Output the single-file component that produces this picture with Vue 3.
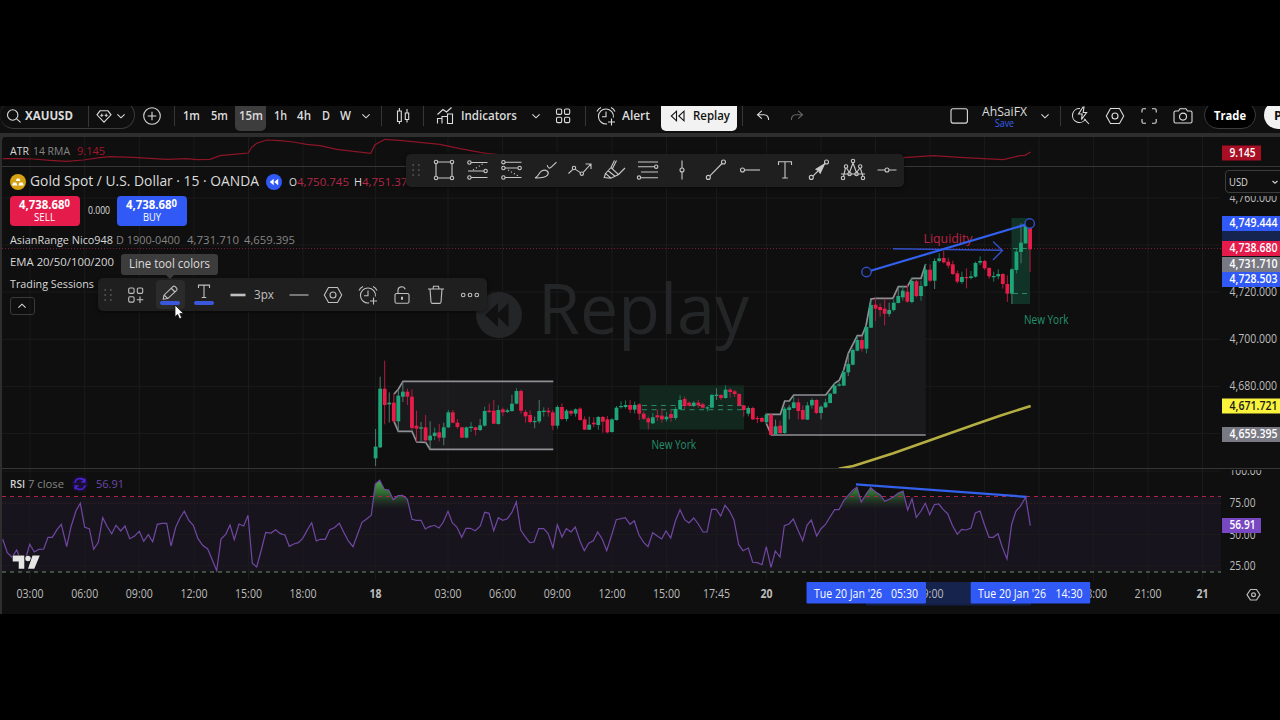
<script setup>
import { h } from 'vue'

// Single line of text stretched to an exact width
const Fit = (p) =>
  h('svg', { width: p.w, height: 20, class: 'fit' }, [
    h('text', { x: 0, y: 14, textLength: p.w, lengthAdjust: 'spacingAndGlyphs' }, p.sup ? [p.t, h('tspan', { dy: -1.8, 'font-size': 10 }, p.sup)] : p.t),
  ])
Fit.props = ['w', 't', 'sup']

const dot = (x, y, r = 1.7) => `<circle cx="${x}" cy="${y}" r="${r}"/>`
const p = (d, extra = '') => `<path d="${d}" ${extra}/>`
const hexa = p('M-4.5-7.5H4.5L8.7 0 4.5 7.5H-4.5L-8.7 0Z') + dot(0, 0, 3)
const alarm = p('M7.4 1.5A7.5 7.5 0 1 0 1 7.9M0-4.5V.8H-4M-9-4.5A8 8 0 0 1-5-8.6M5-8.6A8 8 0 0 1 9-4.5M5.5 2.5V9.5M2 6H9')
const glyphs = {
  search: dot(-.3, -1, 5.2) + p('M3.6 2.8 7.6 6.3'),
  gem: p('M-4-5.2H4L7-1.2 0 6.2-7-1.2Z') + p('M-2.2-2.4V1M-3.7-.7H-.7M2.2-2.4V1M.7-.7H3.7', 'stroke-width="1"'),
  chev: p('M-3.6-1.6 0 1.8 3.6-1.6'),
  up: p('M-3.6 1.6 0-1.8 3.6 1.6'),
  plus: dot(0, 0, 8.3) + p('M-4.3 0H4.3M0-4.3V4.3'),
  candles: p('M-5.5-5H-1.7V5.5H-5.5ZM-3.6-8V-5M-3.6 5.5V8M2.3-3H5.7V3.5H2.3ZM4-7V-3M4 3.5V6.5'),
  ind: p('M-7.5 7.5V2.5H-3V7.5M-3 7.5V.5H2.5V7.5M2.5 7.5V-2H7.5V7.5ZM-7.5-1.5-2-6.5 1.5-4 6.5-8.5'),
  grid: [[-6.5, -7], [1.5, -7], [-6.5, 1.2], [1.5, 1.2]].map(([x, y]) => `<rect x="${x}" y="${y}" width="5.2" height="5.4" rx="1.3"/>`).join(''),
  alarm,
  undo: p('M-1.2-5.2-5.5-1.3-1.2 2.6M-5.5-1.3H1Q5.6-1.3 5.6 4'),
  redo: p('M1.2-5.2 5.5-1.3 1.2 2.6M5.5-1.3H-1Q-5.6-1.3-5.6 4'),
  layout: '<rect x="-8" y="-7.3" width="16.4" height="14.4" rx="2"/>',
  flash: p('M4.5 3A7 7 0 1 1-1-7.5M3.2 2.8 8 8M2-9-2.5-2H1.2L.5 3.5 5.6-3.5H2.2L3-9Z'),
  hexa,
  full: p('M-7-3.5V-6Q-7-7.2-5.8-7.2H-3M3-7.2H6Q7.2-7.2 7.2-6V-3.5M7.2 3V6Q7.2 7.2 6 7.2H3M-3 7.2H-5.8Q-7 7.2-7 6V3'),
  camera: '<path d="M-7.5-5H-4.5L-3-7.3H3L4.5-5H7.5Q9-5 9-3.500V5.500Q9 7 7.500 7H-7.500Q-9 7-9 5.500V-3.500Q-9-5-7.500-5Z"/>' + dot(0, .6, 3.5),
  rect: p('M-6.2-8H6.2M-6.2 8H6.2M-8-6V6M8-6V6') + dot(-8, -8) + dot(8, -8) + dot(-8, 8) + dot(8, 8),
  fib1: p('M-7-7.5H9.5M-10 1H6M-7 7.5H9.5') + p('M-5 0 6-7', 'stroke-dasharray="1.2 2.2"') + dot(-8.6, -7.5) + dot(7.6, 1) + dot(-8.6, 7.5),
  fib2: p('M-7-7.8H9.5M-7-2H5.8M-7 7.5H9.5') + p('M-4 0 7 6.5', 'stroke-dasharray="1.2 2.2"') + dot(-8.6, -7.8) + dot(-8.6, -2) + dot(7.6, -2) + dot(-8.6, 7.5),
  brush: p('M-11 8C-7.500 7-7.500 2.500-4 .8 0-1.200 3.800 2 1.500 5.200-1 8.300-6 8-11 8ZM1.200-4.800Q2.500 0 5.500-3.200L10.500-7.800'),
  poly: p('M-11.5 3.5-7.4-.3M-4.6-.6.4 2.6M3.3 2.3 10.8-6M5.5-6H11V-1') + dot(-6, -2) + dot(1.8, 3.7),
  marker: p('M-1.500-1.500 2.500-9.500M-8.500 3.500-3-2.500 4.500 4.500-3 8.200ZM-8.500 3.500-9.800 7.500-3 8.200M-5.800.8 1 6.200M4.500 4.500 11-2M-3-2.500.5-9.500'),
  chan: p('M-10-8H10M-10-3.3H6M-7 2H10M-7 7.8H10') + dot(8.2, -3.3) + dot(-9, 7.6),
  vert: p('M0-9.5V-1.8M0 1.8V9.5') + dot(0, 0, 2),
  trend: p('M-6.1 5.9 6-6.5') + dot(-7.7, 7.4, 2) + dot(7.5, -8, 2),
  ray: p('M-5.5 0H10') + dot(-7.5, 0, 2),
  text: p('M-6.5-5V-8.2H6.5V-5M0-8.2V8M-2.8 8H2.8'),
  arrow: p('M-6.1 6.1-1 1M3-3 6-6.5') + p('M-3-.8 5.500-6 1.200 3.200-.3.9Z', 'fill="currentColor"') + dot(-7.7, 7.4, 2) + dot(7.5, -8, 2),
  pattern: p('M-9.5 6.5-7.5-2M-6.5-2-3.5 2.5M-3.5 2.5 0-7M0-7 3.5 2.5M3.5 2.5 7-2M7.3-2 10 6.5M-12 4H12') + dot(-10, 8) + dot(-7, -3.5) + dot(-3.5, 4) + dot(0, -9) + dot(3.5, 4) + dot(7.2, -3.5) + dot(10, 8),
  hline: p('M-9.5 0H-2M2 0H9.5') + dot(0, 0, 2),
  tmpl: [[-7.3, -7], [1.3, -7], [-7.3, 1.7]].map(([x, y]) => `<rect x="${x}" y="${y}" width="5.4" height="5.4" rx="1.3"/>`).join('') + p('M4 1.5V8M.8 4.8H7.3'),
  pencil: p('M-6.8 4.2-6 .2 2.8-8.4Q4-9.5 5.2-8.3L6.6-6.8Q7.6-5.6 6.6-4.6L-2.2 3.6-6.8 4.2ZM-5.5.5-2.3 3.3M1-7 5-3'),
  t2: p('M-5.5-7V-9.9H5.5V-7M0-9.9V2.5M-2.3 2.5H2.3'),
  thick: p('M-7.5 0H7.5', 'stroke-width="2.6"'),
  thin: p('M-9.5 0H9.5'),
  lock: '<rect x="-7" y="-1.5" width="14" height="9.8" rx="1.6"/>' + p('M-4-1.5V-4.5A3.7 3.7 0 0 1 3.2-5.7') + p('M0 1.7V4.7', 'stroke-width="2"'),
  trash: p('M-8-6H8M-6-6-5 7Q-4.9 8.4-3.5 8.4H3.5Q4.9 8.4 5 7L6-6M-3-6-2.5-8.7H2.5L3-6'),
  more: dot(-6.8, 0, 1.8) + dot(0, 0, 1.8) + dot(6.8, 0, 1.8),
  grip: [-5, 0, 5].map((y) => `<path d="M-3.6 ${y}h1.6M2 ${y}h1.6" stroke="#5c5c5c" stroke-width="1.5"/>`).join(''),
  rew: p('M-1.5-4.8V4.8L-6.7 0ZM6-4.8V4.8L.8 0Z'),
}
const Icon = (q) => h('svg', { width: 28, height: 28, viewBox: '-14 -14 28 28', class: 'icon', innerHTML: glyphs[q.n] })
Icon.props = ['n']

const bar = [
  { w: 34, icon: 'plus' }, { w: 5 }, { w: 1, div: 1 }, { w: 4 },
  { w: 25, t: '1m', tw: 17 }, { w: 31, t: '5m', tw: 17 }, { w: 31, t: '15m', tw: 24, on: 1 },
  { w: 29, t: '1h', tw: 13 }, { w: 18, t: '4h', tw: 14 }, { w: 25, t: 'D', tw: 8 }, { w: 15, t: 'W', tw: 11 },
  { w: 26, icon: 'chev' }, { w: 2 }, { w: 1, div: 1 }, { w: 41, icon: 'candles' }, { w: 1, div: 1 }, { w: 5 },
  { w: 32, icon: 'ind' }, { w: 56, t: 'Indicators', tw: 56 }, { w: 38, icon: 'chev' }, { w: 16, icon: 'grid' },
  { w: 14 }, { w: 1, div: 1 }, { w: 4 }, { w: 32, icon: 'alarm' }, { w: 28, t: 'Alert', tw: 28 }, { w: 11 },
  { w: 76, replay: 1 }, { w: 5 }, { w: 1, div: 1 }, { w: 39, icon: 'undo' }, { w: 30, icon: 'redo', dim: 1 },
  { w: 138 }, { w: 17, icon: 'layout' }, { w: 15 }, { w: 45, name: 1 }, { w: 3 }, { w: 30, icon: 'chev' }, { w: 1, div: 1 },
  { w: 39, icon: 'flash' }, { w: 30, icon: 'hexa' }, { w: 38, icon: 'full' }, { w: 30, icon: 'camera' }, { w: 6 },
]
const tools = ['rect', 'fib1', 'fib2', 'brush', 'poly', 'marker', 'chan', 'vert', 'trend', 'ray', 'text', 'arrow', 'pattern', 'hline']

// [wick top, body top, body bottom, wick bottom, rising], in thirds of a pixel below y0
const series = [
  [250, `537,590,625,648,1 380,416,592,594,1 332,416,465,523,0 427,458,463,518,1 432,458,514,518,0 418,437,514,545,1 396,425,440,456,1 416,425,440,465,0 418,440,534,540,0 482,527,536,575,0 516,532,536,575,1 495,532,571,577,0 514,557,571,596,1 533,548,558,570,1 522,547,563,574,0 518,532,563,586,1 480,487,532,534,1 480,487,518,520,0 507,518,531,536,0 530,532,563,564,0 530,532,563,565,1 516,530,534,546,1 530,532,540,556,0 507,526,540,543,1 470,483,527,530,1 461,482,486,490,0 450,482,521,522,0 466,480,522,524,1 473,478,487,499,0 476,481,486,489,1 434,461,483,485,1 415,423,461,463,1 418,423,482,491,0 480,486,499,518,0 481,495,516,520,0 500,513,516,535,1 450,483,514,520,1 472,482,486,500,1 473,482,487,500,0 480,487,527,540,0 465,471,527,536,1`],
  [340, `190,201,237,240,0 207,212,237,244,1 209,213,221,228,0 205,208,221,230,1 202,206,240,242,0 229,238,269,270,0 230,254,269,270,1 232,248,253,262,0 228,231,255,269,1 228,231,245,278,0 228,238,277,280,0 235,238,276,278,1 198,203,240,242,1 184,198,201,206,1 181,195,201,206,1 180,195,209,219,0 185,195,209,220,1 190,193,221,240,0 215,221,236,240,0 230,235,247,268,0 219,232,250,252,1 209,226,232,243,0 205,227,238,248,0 216,230,238,245,1 209,222,234,245,0 201,207,234,240,1 166,180,208,210,1 170,177,198,207,0 185,188,197,200,0 183,188,198,201,1 180,188,196,203,0 188,193,203,206,0 198,202,205,214,1 161,165,203,205,1 145,164,168,180,1 163,165,174,180,0 136,149,174,176,1 144,149,156,173,0 150,154,162,171,0 160,162,196,200,0 195,196,210,230,0 198,204,221,229,1 200,204,238,240,0 228,234,237,249,0 230,234,245,247,0 222,224,246,252,1 222,224,285,285,0 239,259,283,285,1 242,257,279,283,0 200,206,279,283,1`],
  [210, `585,592,600,628,1 560,577,594,596,1 566,577,603,628,0 586,600,628,630,0 576,586,629,630,1 564,570,586,596,1 568,570,609,612,0 586,590,609,628,1 566,577,592,594,1 549,551,579,580,1 520,527,551,552,1 516,523,527,530,1 480,486,527,528,1 430,462,487,498,1 415,420,464,466,1 378,390,422,424,1 378,390,416,425,0 347,351,416,430,1 270,285,353,354,1 264,284,296,333,0 280,291,300,320,0 266,296,311,346,0 278,300,312,320,1 268,278,300,305,1 230,258,279,280,1 226,242,262,272,1 222,245,275,278,0 205,213,276,280,1 210,214,258,262,0 212,228,258,272,1 162,179,228,230,1 163,179,212,216,0 145,153,212,237,1 130,145,153,158,1 123,144,157,160,0 143,155,167,175,0 152,163,192,195,0 182,190,215,220,0 185,201,216,222,1 175,201,204,235,0 183,199,204,208,1 155,159,200,203,1 139,153,158,165,1 150,153,175,180,0 172,174,199,206,0 185,198,200,215,1 178,192,199,208,1 190,192,222,236,0 196,222,251,276,0 175,178,251,282,1 117,125,180,190,1 40,98,126,160,1 36,46,100,102,1 40,50,118,186,0`],
]
const candles = series
  .flatMap(([y0, s]) => s.split(' ').map((c) => { const v = c.split(',').map(Number); return { t: y0 + v[0] / 3, o: y0 + v[1] / 3, c: y0 + v[2] / 3, b: y0 + v[3] / 3, up: v[4] } }))
  .map((c, i) => ({ ...c, x: 375.6 + 4.545 * i, g: c.up && (c.o - c.t > 6 || c.b - c.c > 6) }))

const pts = (x0, y0, s) => s.split(' ').map((q) => { const [x, y] = q.split(',').map(Number); return `${(x0 + x / 3).toFixed(1)},${(y0 + y / 3).toFixed(1)}` }).join(' ')

const box1 = pts(280, 250, '342,432 355,418 369,394 820,394')
const box1b = pts(280, 250, '342,514 355,544 396,544 410,576 437,577 450,598 820,598')
const box2 = pts(760, 210, '19,640 19,613 61,613 74,573 88,573 101,555 197,555 224,520 238,511 251,480 265,430 292,377 306,377 318,347 333,267 347,265 398,265 401,260 415,230 442,230 456,205 483,205 497,162')
const box2b = pts(760, 210, '19,640 34,675 497,675')
const rev = (s) => s.split(' ').reverse().join(' ')
const ema = pts(760, 210, '236,776 280,768 400,730 540,680 640,645 720,617 812,588')
const atr = [
  pts(0, 100, '8,176 60,176 100,177 150,181 200,184 250,180 300,173 330,170 400,172 500,178 560,176 590,179 630,178 660,167 700,163 745,159 755,142 770,130 800,120 840,122 880,126 920,133 960,137'),
  pts(320, 100, '50,148 152,160 165,134 195,118 240,121 300,127 360,133 420,146 480,157 500,160 700,180 1000,178'),
  pts(640, 100, '790,173 880,167 960,172'),
  pts(940, 100, '190,179 240,167 255,166 272,156'),
].join(' ')
const rsi = [
  pts(0, 460, '8,238 22,278 36,292 50,270 62,300 76,300 89,253 103,276 117,268 131,267 144,232 157,232 171,209 184,193 200,260 213,200 228,152 241,130 254,202 268,206 281,268 295,247 308,173 321,199 335,221 348,196 362,213 375,198 389,236 403,229 418,214 431,244 445,224 458,245 472,193 485,190 500,190 513,258 527,202 540,174 553,154 567,182 580,196 594,236 608,256 623,267 636,298 650,332 663,237 677,223 690,195 703,239 717,192 731,198 744,166 757,310 770,321 784,270 797,217 813,219 827,209 841,221 855,225 868,259 881,252 895,248 908,235 922,210 935,188 949,243 961,238 976,238 989,209 1003,203 1018,190 1032,218 1045,243 1059,260 1072,225 1086,187 1099,178 1114,166 1126,72 1139,61 1153,88 1166,90 1180,119 1194,107 1208,106 1222,118 1236,178 1249,181 1263,181 1276,207 1290,199'),
  pts(430, 460, '0,200 13,196 27,204 40,186 54,154 67,188 81,202 95,232 108,205 121,205 136,212 151,198 164,157 177,160 191,212 205,173 218,181 232,176 245,158 259,126 272,210 285,229 299,248 312,246 326,206 341,206 354,220 369,263 382,194 396,231 409,206 423,216 436,201 450,243 463,272 476,250 490,242 503,216 517,238 530,272 546,222 559,179 586,173 600,193 613,182 627,225 641,247 654,260 668,218 682,228 695,237 708,213 722,234 736,184 750,149 764,179 777,189 791,174 805,192 819,216 831,216 845,148 859,148 872,168 885,136 899,154 912,180 926,254 939,272 955,264 968,307 982,308 996,314 1009,260 1023,322 1036,273 1050,291 1063,197 1077,192 1090,177 1104,211 1118,242 1131,196 1144,180 1160,228 1173,206 1186,194 1200,171 1214,149 1227,149 1241,122 1254,107 1268,91'),
  pts(840, 460, '51,82 64,126 78,103 92,83 106,95 120,104 134,124 148,118 161,110 175,99 189,93 203,150 216,116 229,172 243,153 256,130 269,164 283,134 296,132 310,149 323,161 337,196 352,223 365,208 379,210 393,204 406,159 420,153 433,193 447,232 460,232 474,221 487,262 501,297 515,192 528,153 541,139 557,112 571,197'),
].join(' ')
const hot1 = pts(0, 460, '1116,144 1126,72 1139,61 1153,88 1166,90 1180,119 1194,107 1208,106 1222,118 1229,144')
const hot2 = pts(840, 460, '-4,144 11,122 51,82 64,126 78,103 92,83 106,95 120,104 134,124 148,118 161,110 175,99 189,93 201,144')

const times = [[30, '03:00'], [84.7, '06:00'], [139.3, '09:00'], [194, '12:00'], [248.5, '15:00'], [303, '18:00'], [375.6, '18', 1], [448, '03:00'], [502.6, '06:00'], [557.2, '09:00'], [612, '12:00'], [666.5, '15:00'], [716.5, '17:45'], [766.4, '20', 1], [821, ''], [875.5, ''], [930, '09:00'], [984.6, ''], [1039.2, ''], [1093.6, '18:00'], [1148, '21:00'], [1202.5, '21', 1]]
const prices = [[198, '4,760.000'], [245, ''], [292, '4,720.000'], [339.3, '4,700.000'], [386.4, '4,680.000'], [433.6, '']]
const levels = [[471, '100.00', 32], [502.7, '75.00', 26], [534.5, '50.00', 26], [565.6, '25.00', 26]]
const tags = [
  [145.5, 15, '9.145', '#a80f24', '#fff', 39, 26], [216, 15, '4,749.444', '#3059f5', '#fff', 58, 48], [241, 15, '4,738.680', '#e51b4b', '#fff', 58, 48],
  [257, 15, '4,731.710', '#797983', '#fff', 58, 48], [272, 15, '4,728.503', '#3059f5', '#fff', 58, 48], [398.5, 15, '4,671.721', '#f9f33e', '#1a1a1a', 58, 48],
  [427, 15, '4,659.395', '#797983', '#fff', 58, 48], [518, 15, '56.91', '#7847c2', '#fff', 39, 26],
]
</script>

<template>
  <div class="page">
    <div class="app">
      <header class="topbar">
        <div class="pill">
          <span class="c25"><Icon n="search" /></span>
          <Fit class="b" :w="48" t="XAUUSD" />
          <i class="sep pillsep"></i>
          <span class="gem"><Icon n="gem" /></span>
          <span class="gchev"><Icon n="chev" /></span>
        </div>
        <div v-for="(c, i) in bar" :key="i" class="cell" :class="{ sep: c.div, on: c.on, replay: c.replay, dim: c.dim, user: c.name }" :style="{ width: c.w + 'px' }">
          <Icon v-if="c.icon" :n="c.icon" />
          <Fit v-if="c.t" class="m" :w="c.tw" :t="c.t" />
          <template v-if="c.replay"><Icon n="rew" /><Fit class="m" :w="37" t="Replay" /></template>
          <template v-if="c.name"><Fit class="m s12" :w="45" t="AhSaiFX" /><Fit class="save" :w="19" t="Save" /></template>
        </div>
        <div class="trade"><Fit class="b" :w="32" t="Trade" /></div>
        <div class="publish"><Fit class="b" :w="8" t="P" /></div>
      </header>

      <main class="stage">
        <svg class="chart" width="1280" height="481" viewBox="0 133 1280 481">
          <defs>
            <linearGradient id="hot" gradientUnits="userSpaceOnUse" x1="0" y1="480" x2="0" y2="508">
              <stop offset="0" stop-color="#4fae4c" /><stop offset=".5" stop-color="#357a37" stop-opacity=".8" /><stop offset="1" stop-color="#1d3a24" stop-opacity=".1" />
            </linearGradient>
            <clipPath id="mainpane"><rect x="2" y="167" width="1278" height="301" /></clipPath>
            <clipPath id="rsipane"><rect x="2" y="470" width="1278" height="120" /></clipPath>
            <clipPath id="below"><rect x="1222" y="196" width="58" height="20" /></clipPath>
          </defs>
          <rect x="0" y="133" width="1280" height="4" fill="#2e2e2e" />
          <path d="M0 133H8Q2 137 2 142V614H0Z" fill="#2e2e2e" />
          <rect x="2" y="496.5" width="1219" height="75.5" fill="#18141d" />
          <g class="grid">
            <path v-for="t in times" :key="t[0]" :d="`M${t[0]} 137V580`" />
            <path v-for="q in prices" :key="q[0]" :d="`M2 ${q[0]}H1220`" />
            <path v-for="q in levels" :key="q[0]" :d="`M2 ${q[0]}H1220`" />
          </g>
          <path d="M2 166.5H1280M2 468.5H1280" stroke="#363636" />

          <g fill="#242527">
            <circle cx="499" cy="315" r="23" />
            <path d="M498 303V327L485 315ZM508.5 303V327L496 315Z" fill="#111" />
            <text x="538" y="333.5" font-size="70" textLength="211" lengthAdjust="spacingAndGlyphs">Replay</text>
          </g>

          <polyline :points="atr" fill="none" stroke="#8c1528" stroke-width="1.2" />
          <path d="M2 248.5H1221" stroke="#7d1c36" stroke-dasharray="1 2" />

          <polygon :points="box1 + ' ' + rev(box1b)" fill="#1a1a1d" />
          <polygon :points="box2 + ' ' + rev(box2b)" fill="#1a1a1d" />
          <path d="M448 385V449M502.6 382V449M875.5 300V434M821 397V434" stroke="#222225" />
          <rect x="639.5" y="385.3" width="104.5" height="44.2" fill="#12281f" />
          <path d="M642 405.5H744M642 409.7H744" stroke="#2a8a68" stroke-dasharray="5 4.5" />
          <rect x="1011.5" y="218" width="18.5" height="86" fill="#113226" />
          <path d="M1013 248.5H1030M1013 293.5H1030" stroke="#2a8a68" stroke-dasharray="5 4" />
          <g fill="none" stroke="#8f8f95" stroke-width="1.7">
            <polyline :points="box1" /><polyline :points="box1b" /><polyline :points="box2" /><polyline :points="box2b" />
          </g>

          <g v-for="(c, i) in candles" :key="i">
            <path :d="`M${c.x} ${c.t}V${c.b}`" :stroke="c.g ? '#53786d' : c.up ? '#17805f' : '#b31b40'" />
            <rect :x="c.x - 1.9" :y="c.o" width="3.8" :height="Math.max(1.2, c.c - c.o)" :fill="c.up ? '#1ea67a' : '#e81c49'" />
          </g>
          <polyline :points="ema" fill="none" stroke="#b5ae42" stroke-width="2.5" clip-path="url(#mainpane)" />

          <g class="t12" fill="#23926d">
            <text x="651.5" y="449.3" textLength="44.5" lengthAdjust="spacingAndGlyphs">New York</text>
            <text x="1024" y="324" textLength="44.5" lengthAdjust="spacingAndGlyphs">New York</text>
          </g>
          <text class="t12" x="923.5" y="243" fill="#c02446" textLength="49" lengthAdjust="spacingAndGlyphs">Liquidity</text>
          <path d="M893 248.8 1002 250.3M993 241.5 1002.5 250.4 993 260" fill="none" stroke="#3050c8" stroke-width="1.4" />
          <path d="M866.5 272 1029.5 223.5" stroke="#3360ee" stroke-width="2.2" />
          <g fill="#101014" stroke="#2f4fc4" stroke-width="1.4"><circle cx="866.5" cy="272" r="4.7" /><circle cx="1029.7" cy="223.5" r="4.7" /></g>

          <polygon :points="hot1" fill="url(#hot)" /><polygon :points="hot2" fill="url(#hot)" />
          <path d="M2 496.5H1221" stroke="#b32346" stroke-dasharray="4 4" />
          <path d="M2 503.5H1221" stroke="#391a2b" stroke-dasharray="1 2" />
          <path d="M2 572H1221" stroke="#50664f" stroke-width="1.3" stroke-dasharray="4 4" />
          <polyline :points="rsi" fill="none" stroke="#7048a3" stroke-width="1.2" />
          <path d="M856 484.3 1026.5 496.8" stroke="#3360ee" stroke-width="2.2" />
          <g fill="#e6e6e6" stroke="#0f0f0f" stroke-width="1" paint-order="stroke">
            <path d="M12.7 555.6H24.3V568.8H18.7V561.5H12.7Z" /><circle cx="28" cy="558.5" r="2.7" /><path d="M32.5 555.6H39.8L34.3 568.8H28Z" />
          </g>

          <rect x="926" y="582" width="45" height="23" fill="#16234d" />
          <rect x="866" y="603" width="165" height="2.5" fill="#14204a" />
          <g class="t12" fill="#bdbdbd">
            <text v-for="q in prices" :key="q[0]" x="1229.5" :y="q[0] + 3.5" :clip-path="q[0] < 200 ? 'url(#below)' : null" textLength="47.5" lengthAdjust="spacingAndGlyphs">{{ q[1] }}</text>
            <g clip-path="url(#rsipane)">
              <text v-for="q in levels" :key="q[0]" x="1229.5" :y="q[0] + 4.3" :textLength="q[2]" lengthAdjust="spacingAndGlyphs">{{ q[1] }}</text>
            </g>
            <text v-for="t in times" :key="t[0]" :x="t[0] - (t[2] ? 6 : 13.5)" y="598.2" :textLength="t[2] ? 12 : 27" :font-weight="t[2] ? 700 : 400" lengthAdjust="spacingAndGlyphs">{{ t[1] }}</text>
          </g>
          <rect x="1222" y="231" width="58" height="10" fill="#15244f" />
          <rect x="806.5" y="582" width="119.5" height="21.5" rx="1" fill="#3059f5" />
          <rect x="970.7" y="582" width="119.5" height="21.5" rx="1" fill="#3059f5" />
          <g class="t12" fill="#fff" font-weight="500">
            <text x="814" y="598.2" textLength="68" lengthAdjust="spacingAndGlyphs">Tue 20 Jan '26</text>
            <text x="891" y="598.2" textLength="27" lengthAdjust="spacingAndGlyphs">05:30</text>
            <text x="978" y="598.2" textLength="68" lengthAdjust="spacingAndGlyphs">Tue 20 Jan '26</text>
            <text x="1055.5" y="598.2" textLength="27" lengthAdjust="spacingAndGlyphs">14:30</text>
          </g>
          <g v-for="t in tags" :key="t[0]">
            <rect x="1222" :y="t[0]" :width="t[5]" :height="t[1]" :fill="t[3]" />
            <text class="t12" x="1229.5" :y="t[0] + 11.4" :fill="t[4]" font-weight="600" :textLength="t[6]" lengthAdjust="spacingAndGlyphs">{{ t[2] }}</text>
          </g>
          <g fill="none" stroke="#bbb" stroke-width="1.2"><path d="M1250.5 589.5H1256.5L1260 594.7 1256.5 600H1250.5L1247 594.7Z" /><circle cx="1253.5" cy="594.7" r="1.9" /></g>
        </svg>

        <div class="legend">
          <div class="row atr"><Fit class="m w" :w="19" t="ATR" /><Fit class="g" :w="37" t="14 RMA" /><Fit class="r ml3" :w="28" t="9.145" /></div>
          <div class="row title">
            <svg class="coin" width="16" height="16" viewBox="0 0 16 16"><circle cx="8" cy="8" r="8" fill="#d6a213" /><path d="M5.8 7 6.8 4.5H9.4L10.4 7ZM2 11.5 3.2 8.5H6.2L7.4 11.5ZM8.4 11.5 9.5 8.5H12.6L13.8 11.5Z" fill="#fff" /></svg>
            <Fit class="big" :w="229" t="Gold Spot / U.S. Dollar · 15 · OANDA" />
            <svg class="rw" width="16" height="16" viewBox="0 0 16 16"><circle cx="8" cy="8" r="8" fill="#3059f5" /><path d="M7.7 4.8V11.2L3.8 8ZM12.2 4.8V11.2L8.3 8Z" fill="#fff" /></svg>
            <Fit class="m" :w="8" t="O" /><Fit class="r2" :w="52" t="4,750.745" /><Fit class="m hh" :w="8" t="H" /><Fit class="r2" :w="52" t="4,751.375" />
          </div>
          <div class="row orders">
            <div class="order sell"><Fit class="b price" :w="51" t="4,738.68" sup="0" /><Fit class="side" :w="21" t="SELL" /></div>
            <Fit class="spread" :w="22" t="0.000" />
            <div class="order buy"><Fit class="b price" :w="51" t="4,738.68" sup="0" /><Fit class="side" :w="18" t="BUY" /></div>
          </div>
          <div class="row asian"><Fit class="m w" :w="103" t="AsianRange Nico948" /><Fit class="g" :w="64" t="D 1900-0400" /><Fit class="g ml4" :w="52" t="4,731.710" /><Fit class="g ml1" :w="51" t="4,659.395" /></div>
          <div class="row ema"><Fit class="m w" :w="104" t="EMA 20/50/100/200" /></div>
          <div class="row sess"><Fit class="m w" :w="84" t="Trading Sessions" /></div>
          <div class="collapse"><Icon n="up" /></div>
        </div>

        <div class="rsi row"><Fit class="b2" :w="15" t="RSI" /><Fit class="g" :w="36" t="7 close" />
          <svg class="sync" width="18" height="18" viewBox="-9 -9 18 18"><circle r="8" fill="#1b1040" opacity=".8" /><path d="M-5-1A5 5 0 0 1 4.5-2.5M5 1A5 5 0 0 1-4.5 2.5M4.8-5.5V-2H1.5M-4.8 5.5V2H-1.5" fill="none" stroke="#5223e0" stroke-width="1.4" /></svg>
          <Fit class="v" :w="28" t="56.91" /></div>

        <div class="usd"><Fit class="m" :w="19" t="USD" /><svg width="8" height="8" viewBox="0 0 8 8"><path d="M1.5 3 4 5.2 6.5 3" fill="none" stroke="#ccc" stroke-width="1.3" /></svg></div>

        <div class="tools"><span class="grip"><Icon n="grip" /></span><span v-for="n in tools" :key="n" class="tool"><Icon :n="n" /></span></div>

        <div class="drawbar">
          <span class="grip"><Icon n="grip" /></span>
          <span class="tool"><Icon n="tmpl" /></span>
          <span class="tool active ink"><Icon n="pencil" /></span>
          <span class="tool ink"><Icon n="t2" /></span>
          <span class="tool"><Icon n="thick" /></span>
          <Fit class="m px" :w="20" t="3px" />
          <span class="tool first"><Icon n="thin" /></span>
          <span class="tool"><Icon n="hexa" /></span>
          <span class="tool"><Icon n="alarm" /></span>
          <span class="tool"><Icon n="lock" /></span>
          <span class="tool"><Icon n="trash" /></span>
          <span class="tool"><Icon n="more" /></span>
        </div>
        <div class="tip"><Fit class="m" :w="81" t="Line tool colors" /></div>
        <svg class="cursor" width="12" height="17" viewBox="0 0 12 17"><path d="M1 1V12.8L3.6 10.4 5.5 14.8 7.7 13.8 5.8 9.6H9.5Z" fill="#fff" stroke="#111" stroke-width=".8" /></svg>
      </main>
    </div>
  </div>
</template>

<style>
html, body { background: #000; overflow: hidden; }
</style>
<style scoped>
.page { width: 1280px; height: 720px; box-sizing: border-box; padding-top: 106px; background: #000; overflow: hidden; font-family: "Open Sans", "Noto Sans", sans-serif; }
.app { height: 508px; background: #0f0f0f; overflow: hidden; color: #dcdcdc; }
.topbar { height: 27px; display: flex; align-items: flex-start; overflow: hidden; }
.cell, .pill, .trade, .publish { height: 20px; flex: none; display: flex; align-items: center; justify-content: center; }
.pill { width: 135px; box-sizing: border-box; height: 28px; margin-top: -5px; padding-top: 2px; border: 1px solid #3b3b3b; border-left: 0; border-radius: 14px; justify-content: flex-start; }
.c25 { width: 25px; display: flex; justify-content: center; }
.pill .sep { height: 22px; margin: 0 3px 0 15px; }
.gem { width: 24px; display: flex; justify-content: center; }
.gchev { width: 10px; display: flex; justify-content: center; }
.sep { width: 1px; flex: none; background: #363636; }
.on { background: #3d3d3d; height: 25px; border-radius: 0 0 5px 5px; align-items: flex-start; }
.dim { color: #666; }
.replay { background: #f2f2f2; color: #111; height: 25px; border-radius: 0 0 5px 5px; align-items: flex-start; }
.replay .icon { margin: -4px 0 0 -5px; }
.replay .fit { margin-left: 1px; }
.user { flex-direction: column; justify-content: flex-start; }
.user .fit { margin-top: -4px; flex: none; }
.user .save { margin-top: -9px; fill: #3560f0; font-size: 10.5px; }
.trade { width: 52px; box-sizing: border-box; height: 28px; margin: -5px 8px 0 0; padding-top: 2px; border: 1px solid #3b3b3b; border-radius: 14px; background: #000; color: #fff; }
.publish { width: 40px; height: 28px; margin-top: -5px; padding-left: 10px; justify-content: flex-start; box-sizing: border-box; border-radius: 14px; background: #f2f2f2; color: #111; }
.publish .fit { margin-top: 2px; }
.icon { flex: none; display: block; fill: none; stroke: currentColor; stroke-width: 1.1; overflow: visible; }
.fit { flex: none; display: block; overflow: visible; fill: currentColor; font-size: 12px; }
.m { font-size: 12.5px; font-weight: 500; }
.topbar .m { font-weight: 600; }
.b { font-size: 12.5px; font-weight: 700; }
.topbar .s12 { font-size: 12px; font-weight: 500; }
.stage { position: relative; height: 481px; }
.chart { display: block; }
.grid path { stroke: #1b1b1c; stroke-width: 1; }
.t12 { font-size: 12px; }
.legend { position: absolute; left: 10px; top: 8px; display: flex; flex-direction: column; align-items: flex-start; }
.row { display: flex; align-items: center; height: 20px; gap: 4px; font-size: 11.5px; }
.row .fit { font-size: 11.5px; }
.row .w { fill: #d8d8d8; }
.row .g { fill: #858585; }
.row .r { fill: #a3162e; }
.ml4 { margin-left: 4px; }
.ml3 { margin-left: 3px; }
.ml1 { margin-left: 2px; }
.title { margin-top: 11px; gap: 0; margin-left: -.5px; }
.title .big { font-size: 14px; margin: 0 7px 0 4px; }
.title .m { margin-left: 7px; }
.title .r2 { fill: #b32748; }
.title .hh { margin-left: 5px; }
.orders { height: 30px; margin-top: 4px; margin-left: -.5px; gap: 8px; }
.orders .spread { margin-top: -2px; }
.order { width: 70px; height: 30px; border-radius: 4px; display: flex; flex-direction: column; align-items: center; color: #fff; }
.sell { background: #e51b4b; }
.buy { background: #3059f5; }
.buy { margin-left: -1px; }
.order .price { margin-top: -1px; font-size: 12px; }
.order .side { margin-top: -8px; font-size: 10.5px; }
.row .spread { font-size: 10.5px; }
.asian { margin-top: 4px; gap: 3px; }
.ema { margin-top: 2px; }
.sess { margin-top: 1.5px; }
.collapse { width: 25px; height: 18px; margin-top: 3.5px; margin-left: -.5px; border: 1px solid #3a3a3a; box-sizing: border-box; border-radius: 3px; display: flex; align-items: center; justify-content: center; }
.rsi { position: absolute; left: 10px; top: 340.5px; gap: 3px; }
.rsi .b2 { fill: #d4d4d4; font-weight: 600; }
.rsi .v { fill: #6b48a8; }
.sync { margin: 0 4px 0 4px; }
.usd { position: absolute; left: 1224.5px; top: 37px; width: 60px; height: 23px; box-sizing: border-box; border: 1px solid #3c3c3c; border-radius: 4px; background: #0f0f0f; display: flex; align-items: center; gap: 23px; padding-left: 3px; }
.usd .m { font-size: 11.5px; }
.tools, .drawbar { position: absolute; display: flex; align-items: center; background: #1f1f1f; border-radius: 5px; box-shadow: 0 1px 4px #0008; }
.tools { left: 406px; top: 21px; width: 498px; height: 33px; color: #c8c8c8; }
.tools .icon { margin-top: -1px; }
.grip { width: 20.6px; display: flex; justify-content: center; }
.tool { width: 34.1px; height: 32px; flex: none; display: flex; align-items: center; justify-content: center; }
.drawbar { left: 98px; top: 145px; width: 389px; height: 33px; color: #c0c0c0; }
.ink { position: relative; }
.ink::after { content: ""; position: absolute; left: 7px; bottom: 6px; width: 20px; height: 3.5px; border-radius: 2px; background: #3b57dc; }
.active::before { content: ""; position: absolute; left: 3px; top: 1px; width: 29px; height: 29px; border-radius: 4px; background: #2b2b2b; }
.active .icon { position: relative; }
.px { margin: 0 8.5px 0 -1.2px; }
.tip { position: absolute; left: 121px; top: 120.5px; width: 97px; height: 21px; background: #3c3c3c; border-radius: 3px; display: flex; align-items: center; justify-content: center; }
.tip .m { font-size: 12px; margin-top: -1px; }
.tip::after { content: ""; position: absolute; left: 45px; top: 21px; border: 4px solid transparent; border-top-color: #3c3c3c; }
.cursor { position: absolute; left: 174px; top: 171px; }
</style>
